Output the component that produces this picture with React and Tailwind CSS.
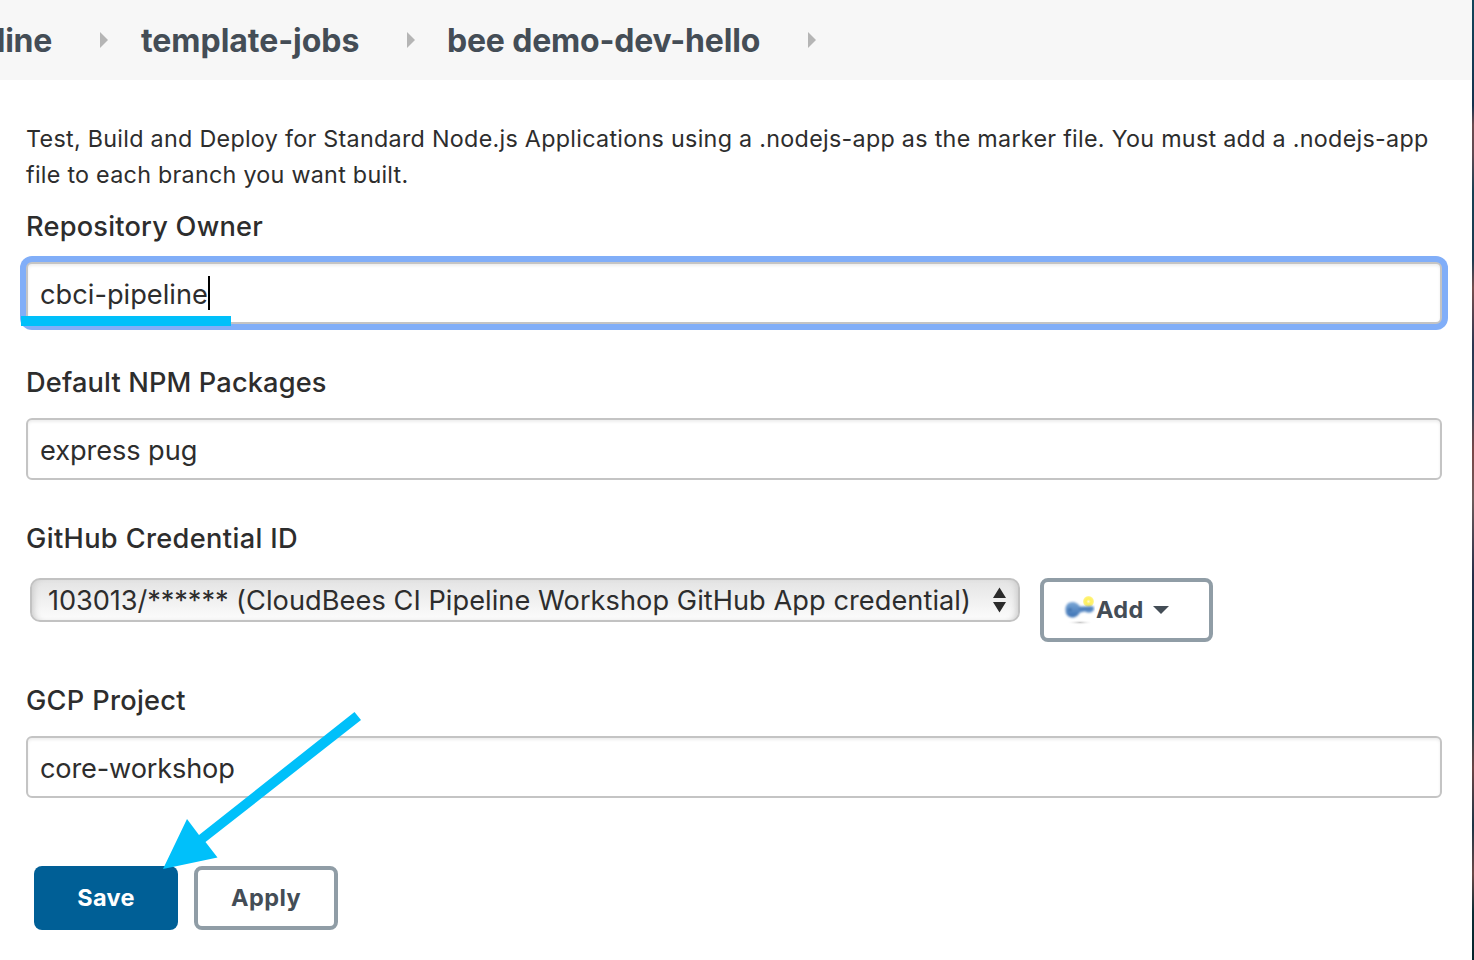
function Crumb({ children, className }) {
  return <span className={`shrink-0 whitespace-nowrap ${className}`}>{children}</span>;
}

function Separator({ className }) {
  return (
    <svg viewBox="0 0 8 16" className={`h-4 w-2 shrink-0 ${className}`}>
      <path d="M0 0 8 8 0 16Z" fill="#b5b5b5" />
    </svg>
  );
}

function Label({ children, className }) {
  return (
    <div className="h-9 text-[27.2px] leading-9 font-medium whitespace-nowrap">
      <span className={className}>{children}</span>
    </div>
  );
}

function TextBox({ children, className }) {
  return (
    <div className={`flex h-[62px] w-[1416px] items-center rounded-md border-2 border-[#c4c4c4] bg-white pt-1 pl-3 text-[27.2px] leading-9 whitespace-nowrap shadow-[inset_0_2px_3px_rgba(0,0,0,0.07)] ${className}`}>
      {children}
    </div>
  );
}

function KeyIcon() {
  return (
    <svg viewBox="0 0 32 32" className="h-8 w-8 shrink-0">
      <defs>
        <linearGradient id="key" x1="0" y1="0" x2="0" y2="1">
          <stop offset="0" stopColor="#7aa6d6" />
          <stop offset="1" stopColor="#3c72b4" />
        </linearGradient>
        <radialGradient id="spark">
          <stop offset="0" stopColor="#fffbd0" />
          <stop offset=".4" stopColor="#fff15a" />
          <stop offset=".8" stopColor="#fff27a" />
          <stop offset="1" stopColor="#fff9b0" stopOpacity="0" />
        </radialGradient>
        <radialGradient id="shade">
          <stop offset="0" stopColor="#c9c9c9" />
          <stop offset="1" stopColor="#ffffff" stopOpacity="0" />
        </radialGradient>
        <filter id="soft">
          <feGaussianBlur stdDeviation="0.8" />
        </filter>
      </defs>
      <ellipse cx="17" cy="28.500" rx="13" ry="2.500" fill="url(#shade)" />
      <circle cx="25.500" cy="7.500" r="6" fill="url(#spark)" />
      <g filter="url(#soft)">
        <path d="M2.500 16Q2.500 8 9.500 8Q14 8 17 12.500L29 12Q31 12 31 14V16L28 18.500H24L22 17.500L17 18.500Q14 23.500 9 23.500Q2.500 23 2.500 16Z" fill="url(#key)" />
        <circle cx="7" cy="15.500" r="1.600" fill="#3b6ca8" />
        <path d="M16 14.500H29" stroke="#3b6ca8" strokeWidth="1.200" />
      </g>
    </svg>
  );
}

export default function App() {
  return (
    <div className="relative flex h-[960px] w-[1474px] overflow-hidden bg-white font-['Inter',sans-serif] text-[#2d2d2d]">
      <main className="w-[1472px] shrink-0">
        <nav className="flex h-20 items-center overflow-hidden bg-[#f7f7f7] text-[32px] leading-10 font-bold text-[#444d56]">
          <div className="flex w-[52px] shrink-0 justify-end pt-0.5">
            <Crumb className="tracking-[-0.3px]">pipeline</Crumb>
          </div>
          <Separator className="ml-12" />
          <Crumb className="ml-[33px] w-[218px] pt-0.5 tracking-[-0.05px]">template-jobs</Crumb>
          <Separator className="ml-12" />
          <Crumb className="ml-8 w-[313px] pt-0.5 tracking-[-0.18px]">bee demo-dev-hello</Crumb>
          <Separator className="ml-12" />
        </nav>

        <form className="flex flex-col pt-[41px] pl-[26px]">
          <p className="text-[23.3px] leading-9 whitespace-nowrap">
            <span className="tracking-[0.29px]">
              Test, Build and Deploy for Standard Node.js Applications using a .nodejs-app as the marker file. You must add a .nodejs-app
            </span>
            <br />
            <span className="tracking-[0.27px]">file to each branch you want built.</span>
          </p>

          <div className="mt-4 flex flex-col gap-[17px]">
            <Label className="tracking-[0.22px]">Repository Owner</Label>
            <TextBox className="relative ring-6 ring-[#81aef8]">
              <span className="tracking-[0.02px]">cbci-pipeline</span>
              <span className="-mt-1 h-[34px] w-0.5 bg-black" />
              <span className="absolute top-[52px] -left-[7px] h-[10px] w-[210px] bg-[#00c0fa]" />
            </TextBox>
          </div>

          <div className="mt-[41px] flex flex-col gap-[17px]">
            <Label className="tracking-[0.15px]">Default NPM Packages</Label>
            <TextBox>
              <span className="tracking-[-0.08px]">express pug</span>
            </TextBox>
          </div>

          <div className="mt-[41px] flex flex-col gap-[21px]">
            <Label className="tracking-[0.36px]">GitHub Credential ID</Label>
            <div className="flex h-16 items-start gap-5 pl-1">
              <div className="flex h-11 w-[990px] items-center justify-between rounded-[10px] border-2 border-[#c2c2c2] bg-linear-to-b from-[#e4e4e4] to-[#fcfcfc] pr-3 pl-4 text-[27.2px] leading-9 whitespace-nowrap shadow-[inset_6px_0_6px_-4px_#cccccc,inset_-6px_0_6px_-4px_#cccccc]">
                <span className="pt-px">
                  <span className="tracking-[-0.08px]">103013/****** </span>
                  <span className="tracking-[0.05px]">(CloudBees CI Pipeline Workshop GitHub App credential)</span>
                </span>
                <svg viewBox="0 0 13 26" className="h-[26px] w-[13px] shrink-0">
                  <path d="M6.500 0.500 13 11H0ZM6.500 25.500 0 15H13Z" fill="#2b2b2b" />
                </svg>
              </div>
              <div className="flex h-16 w-[173px] items-center rounded-lg border-4 border-[#909da6] pl-[19px] text-[23.5px] font-bold text-[#444d56]">
                <KeyIcon />
                <span className="ml-px w-[49px] tracking-[0.3px]">Add</span>
                <svg viewBox="0 0 16 8" className="ml-2 h-2 w-4">
                  <path d="M0 0H16L8 8Z" fill="#444d56" />
                </svg>
              </div>
            </div>
          </div>

          <div className="mt-[41px] flex flex-col gap-[17px]">
            <Label className="tracking-[0.3px]">GCP Project</Label>
            <TextBox>
              <span className="tracking-[-0.18px]">core-workshop</span>
            </TextBox>
          </div>

          <div className="mt-[68px] flex gap-4 pl-2 text-[23.5px] font-bold">
            <div className="flex h-16 w-36 items-center justify-center rounded-lg bg-[#005f96] tracking-[0.3px] text-white">Save</div>
            <div className="flex h-16 w-36 items-center justify-center rounded-lg border-4 border-[#909da6] tracking-[0.4px] text-[#444d56]">Apply</div>
          </div>
        </form>
      </main>
      <div className="w-0.5 shrink-0 bg-[linear-gradient(to_bottom,#12455a_0%,#15314d_11%,#6b4c50_13%,#5f4a52_16%,#173f52_20%,#1c3a50_27%,#76504f_30%,#2b3550_36%,#2a4358_42%,#7a4848_47%,#6d5c5c_52%,#262d48_60%,#0c3544_68%,#163f48_75%,#6b4646_80%,#1c3344_86%,#6a4a48_91%,#0b2c34_95%,#04232a_100%)]" />

      <svg viewBox="0 0 198 160" className="absolute top-[710px] left-[163px] h-[160px] w-[198px]">
        <path d="M0 159 24 109 36 125 191.500 2 198 10 42.500 132 54.500 147.500Z" fill="#00c0fa" />
      </svg>
    </div>
  );
}
